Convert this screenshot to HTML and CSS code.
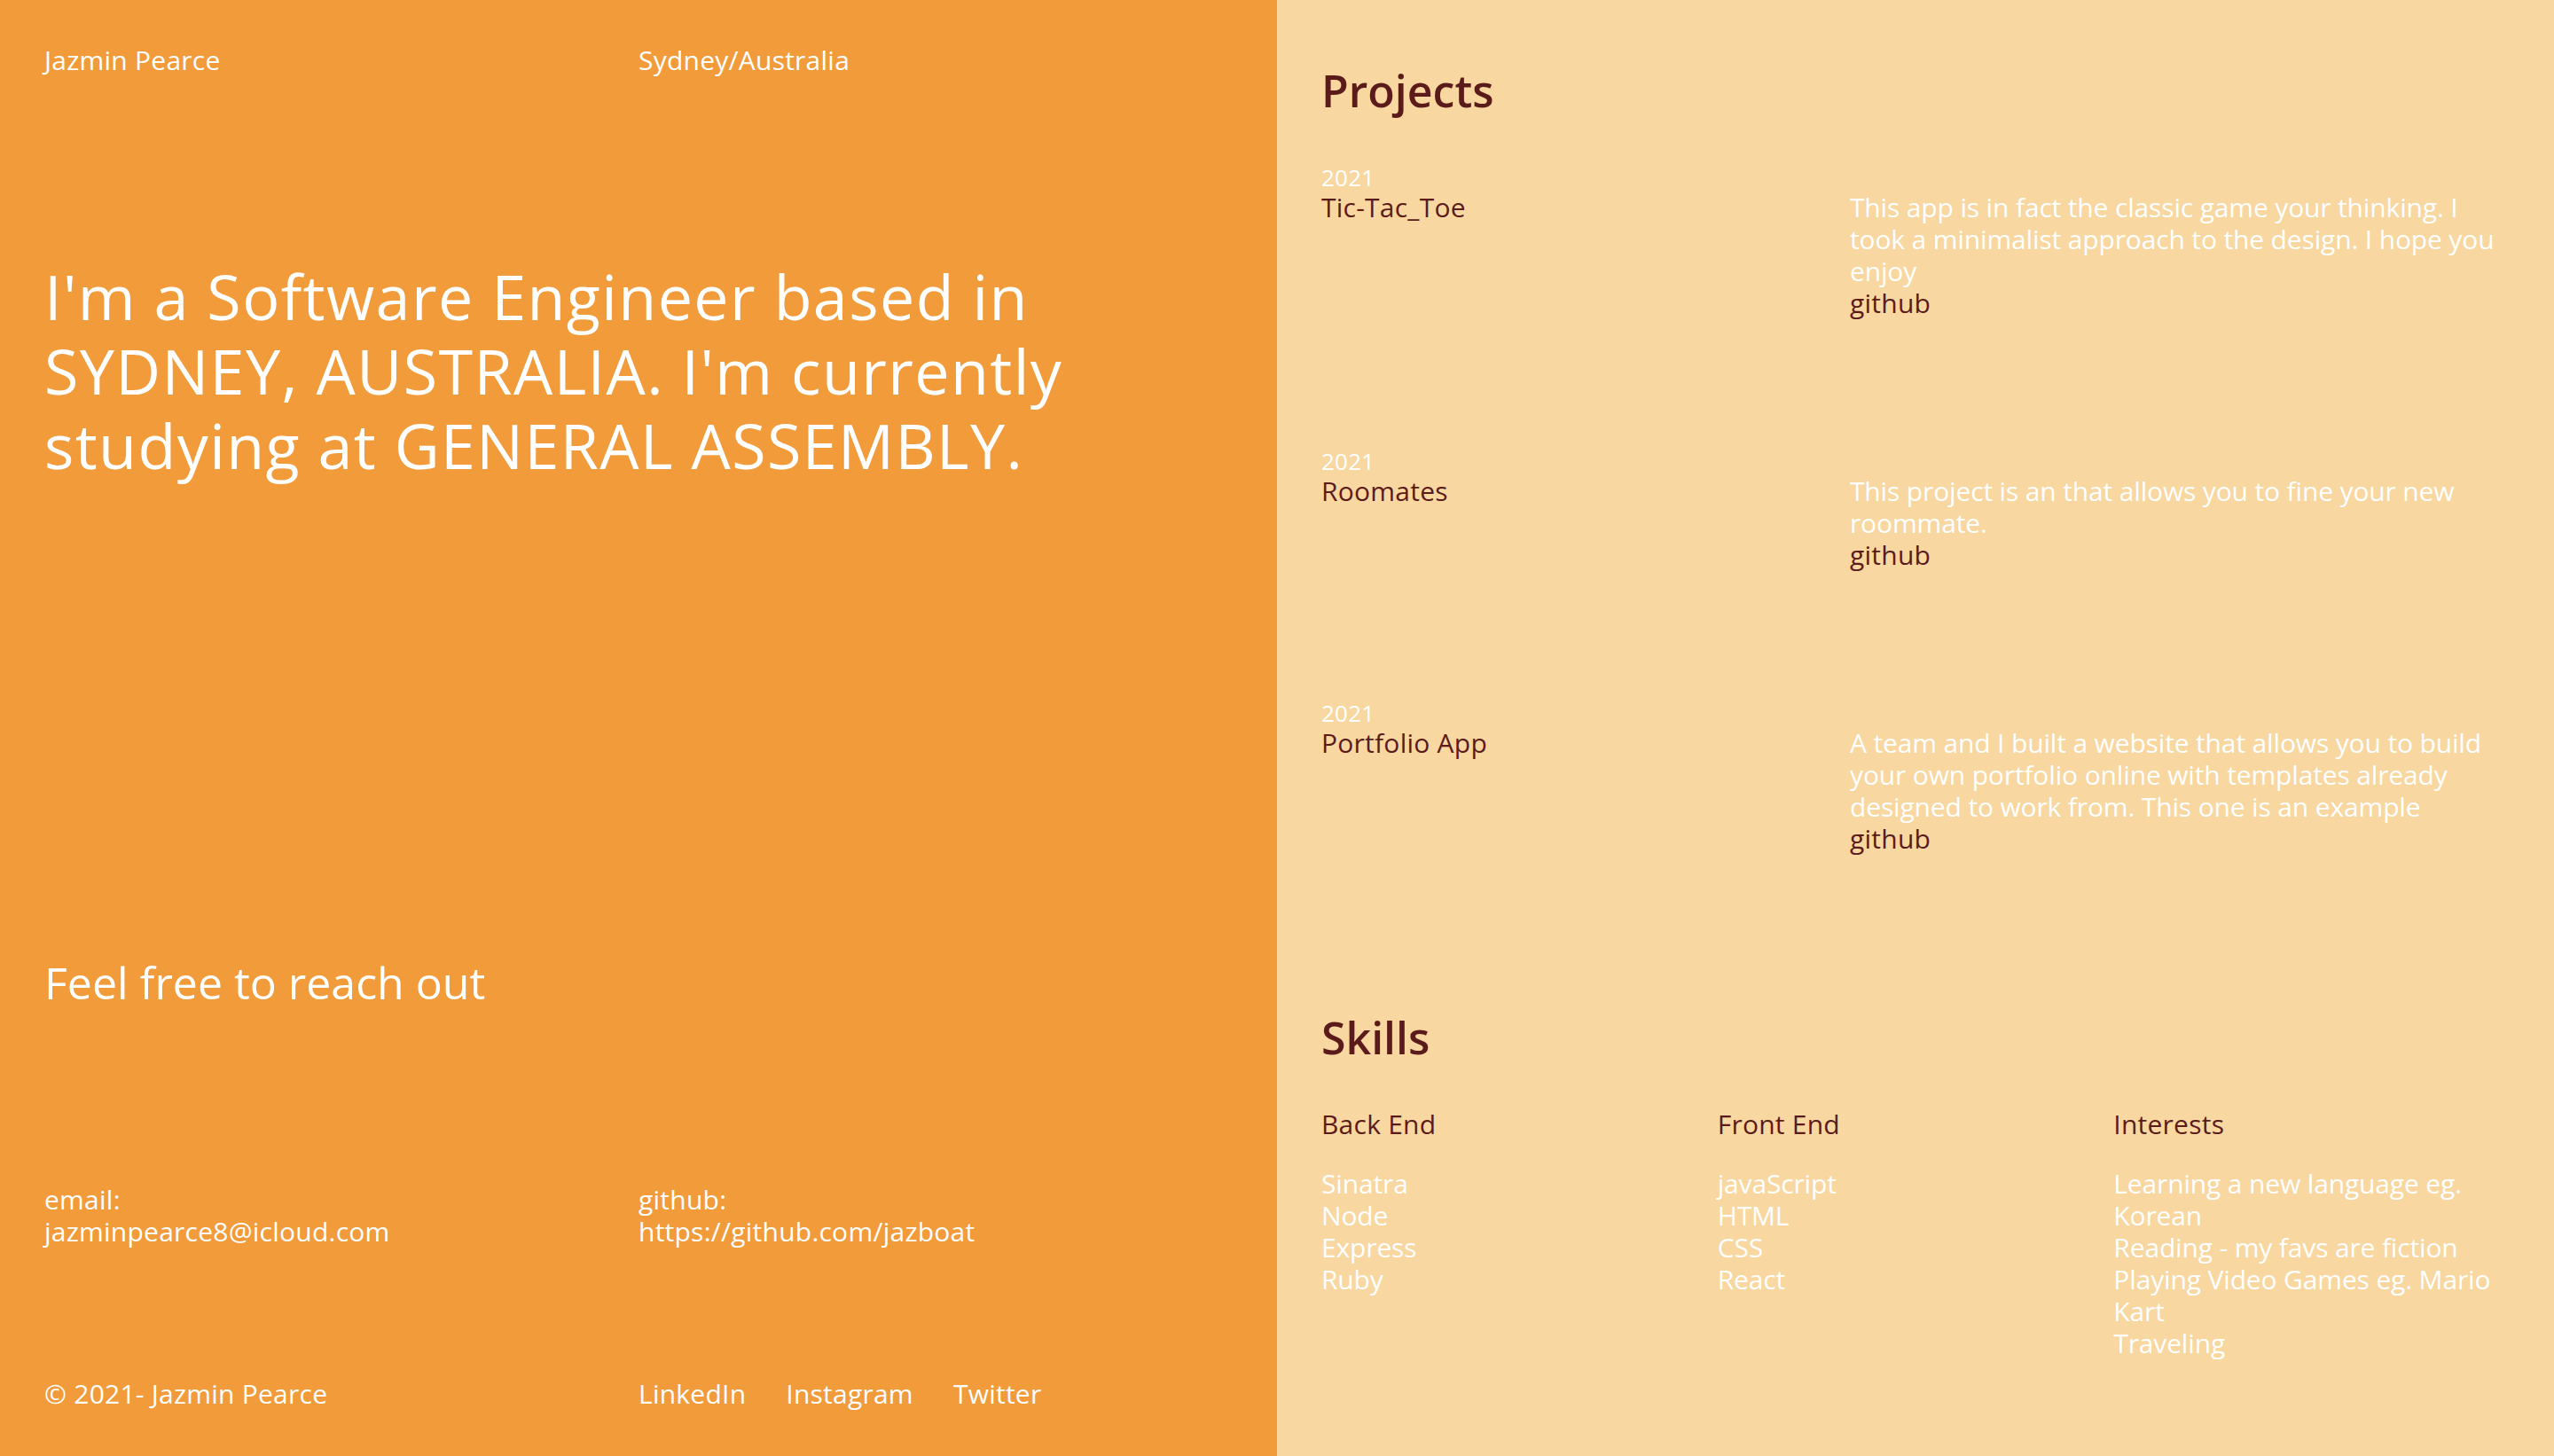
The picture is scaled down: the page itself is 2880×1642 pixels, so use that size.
FILE: index.html
```html
<!DOCTYPE html>
<html lang="en">
<head>
<meta charset="utf-8">
<title>Jazmin Pearce</title>
<link rel="stylesheet" href="styles.css">
</head>
<body>
<div class="page">
  <section class="intro">
    <header class="two-col">
      <div>Jazmin Pearce</div>
      <div>Sydney/Australia</div>
    </header>
    <h1 class="headline">I'm a Software Engineer based in SYDNEY, AUSTRALIA. I'm currently studying at GENERAL ASSEMBLY.</h1>
    <h2 class="reach">Feel free to reach out</h2>
    <div class="two-col contact">
      <div>
        <div>email:</div>
        <div>jazminpearce8@icloud.com</div>
      </div>
      <div>
        <div>github:</div>
        <div>https://github.com/jazboat</div>
      </div>
    </div>
    <footer class="two-col footer">
      <div>© 2021- Jazmin Pearce</div>
      <nav class="social">
        <a href="#">LinkedIn</a>
        <a href="#">Instagram</a>
        <a href="#">Twitter</a>
      </nav>
    </footer>
  </section>

  <section class="work">
    <h2 class="section-title">Projects</h2>
    <div class="projects">
      <article class="project">
        <div class="year">2021</div>
        <div class="project-row">
          <div class="project-name">Tic-Tac_Toe</div>
          <div class="project-info">
            <p class="desc">This app is in fact the classic game your thinking. I took a minimalist approach to the design. I hope you enjoy</p>
            <a class="gh" href="#">github</a>
          </div>
        </div>
      </article>
      <article class="project">
        <div class="year">2021</div>
        <div class="project-row">
          <div class="project-name">Roomates</div>
          <div class="project-info">
            <p class="desc">This project is an that allows you to fine your new roommate.</p>
            <a class="gh" href="#">github</a>
          </div>
        </div>
      </article>
      <article class="project">
        <div class="year">2021</div>
        <div class="project-row">
          <div class="project-name">Portfolio App</div>
          <div class="project-info">
            <p class="desc">A team and I built a website that allows you to build your own portfolio online with templates already designed to work from. This one is an example</p>
            <a class="gh" href="#">github</a>
          </div>
        </div>
      </article>
    </div>

    <h2 class="section-title skills-title">Skills</h2>
    <div class="skills">
      <div class="skill-col">
        <h3>Back End</h3>
        <ul>
          <li>Sinatra</li>
          <li>Node</li>
          <li>Express</li>
          <li>Ruby</li>
        </ul>
      </div>
      <div class="skill-col">
        <h3>Front End</h3>
        <ul>
          <li>javaScript</li>
          <li>HTML</li>
          <li>CSS</li>
          <li>React</li>
        </ul>
      </div>
      <div class="skill-col">
        <h3>Interests</h3>
        <ul>
          <li>Learning a new language eg. Korean</li>
          <li>Reading - my favs are fiction</li>
          <li>Playing Video Games eg. Mario Kart</li>
          <li>Traveling</li>
        </ul>
      </div>
    </div>
  </section>
</div>
</body>
</html>
```
FILE: styles.css
```css
* { box-sizing: border-box; }

html, body {
  margin: 0;
  padding: 0;
}

body {
  font-family: "Open Sans", "Liberation Sans", sans-serif;
  font-size: 30px;
  line-height: 36px;
  letter-spacing: 0.008em;
  color: #ffffff;
}

.page {
  display: grid;
  grid-template-columns: 1440px 1440px;
  height: 1642px;
  overflow: hidden;
}

.intro {
  background: #f29b3a;
  padding: 50px 50px 50px 50px;
  display: flex;
  flex-direction: column;
}

.two-col {
  display: grid;
  grid-template-columns: 670px 670px;
}

.headline {
  margin: 206px 0 0 0;
  font-size: 70px;
  line-height: 84px;
  font-weight: 400;
  letter-spacing: 0.02em;
}

.reach {
  margin: 534px 0 0 0;
  font-size: 50px;
  line-height: 60px;
  font-weight: 500;
  letter-spacing: 0;
}

.contact {
  margin-top: 197px;
}

.footer {
  margin-top: 147px;
}

.social {
  display: flex;
  gap: 45px;
}

.social a {
  color: #ffffff;
  text-decoration: none;
}

.work {
  background: #f8d7a0;
  padding: 72px 50px 50px 50px;
  display: flex;
  flex-direction: column;
}

.section-title {
  margin: 0;
  font-size: 50px;
  line-height: 60px;
  font-weight: 600;
  color: #5c1b1b;
  letter-spacing: 0;
}

.projects {
  margin-top: 53px;
  display: flex;
  flex-direction: column;
  gap: 145px;
}

.year {
  font-size: 26px;
  line-height: 31px;
  font-weight: 400;
}

.project-row {
  display: grid;
  grid-template-columns: 596px 1fr;
}

.project-name {
  color: #5c1b1b;
}

.desc {
  margin: 0;
  font-weight: 400;
  letter-spacing: -0.005em;
}

.gh {
  display: block;
  color: #5c1b1b;
  text-decoration: none;
}

.skills-title {
  margin-top: 176px;
}

.skills {
  margin-top: 50px;
  display: grid;
  grid-template-columns: repeat(3, 1fr);
}

.skill-col h3 {
  margin: 0;
  font-size: 30px;
  line-height: 36px;
  font-weight: 400;
  color: #5c1b1b;
}

.skill-col ul {
  list-style: none;
  margin: 31px 0 0 0;
  padding: 0;
  font-weight: 400;
  letter-spacing: -0.005em;
}
```
